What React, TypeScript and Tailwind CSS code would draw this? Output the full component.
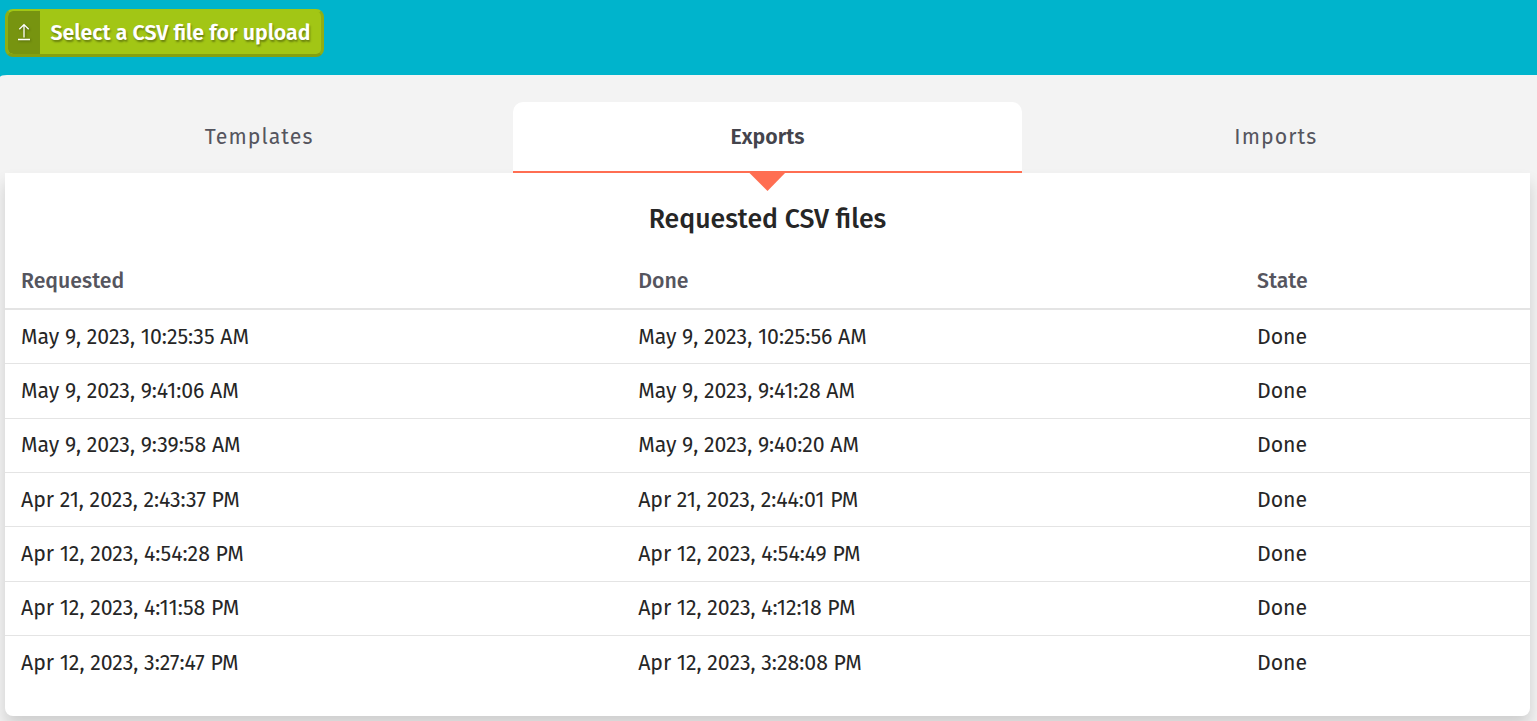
const tabs = [
  { label: "Templates", active: false },
  { label: "Exports", active: true },
  { label: "Imports", active: false },
];

const exportsList = [
  { requested: "May 9, 2023, 10:25:35 AM", done: "May 9, 2023, 10:25:56 AM", state: "Done" },
  { requested: "May 9, 2023, 9:41:06 AM", done: "May 9, 2023, 9:41:28 AM", state: "Done" },
  { requested: "May 9, 2023, 9:39:58 AM", done: "May 9, 2023, 9:40:20 AM", state: "Done" },
  { requested: "Apr 21, 2023, 2:43:37 PM", done: "Apr 21, 2023, 2:44:01 PM", state: "Done" },
  { requested: "Apr 12, 2023, 4:54:28 PM", done: "Apr 12, 2023, 4:54:49 PM", state: "Done" },
  { requested: "Apr 12, 2023, 4:11:58 PM", done: "Apr 12, 2023, 4:12:18 PM", state: "Done" },
  { requested: "Apr 12, 2023, 3:27:47 PM", done: "Apr 12, 2023, 3:28:08 PM", state: "Done" },
];

function UploadButton() {
  return (
    <button className="flex h-12 w-[319px] overflow-hidden rounded-lg border-x-[3px] border-t-2 border-b-[3px] border-x-[#8fae13] border-t-[#a2c615] border-b-[#83a012] bg-[#a2c615] text-white">
      <span className="flex w-8 shrink-0 items-center justify-center self-stretch rounded-l-[5px] bg-[#779410]">
        <svg
          className="mb-[2px] h-[18px] w-[14px] drop-shadow-[1px_1px_1px_rgba(0,0,0,0.3)]"
          viewBox="0 0 14 18"
          fill="none"
          stroke="currentColor"
          strokeWidth="1.3"
        >
          <path d="M7 14.5V1.6M2.3 6.2L7 1.6L11.7 6.2M1 16.5H13" />
        </svg>
      </span>
      <span className="flex-1 text-center text-[21.33px] leading-[45px] font-semibold whitespace-nowrap [text-shadow:1px_2px_2px_rgba(0,0,0,0.35)]">
        Select a CSV file for upload
      </span>
    </button>
  );
}

export default function App() {
  return (
    <div className="h-[721px] overflow-hidden bg-[#00b4cc] font-['Fira_Sans','Noto_Sans',sans-serif] text-[#262626]">

      {/* header */}

      <header className="h-[75px] pt-[9px] pl-[5px]">
        <UploadButton />
      </header>

      <main className="h-[646px] bg-[#f3f3f3] pt-[27px] pr-[7px] pl-[5px] [border-top-left-radius:7px_2px]">

        {/* tabs */}

        <nav className="relative z-10 grid h-[71px] grid-cols-3 text-[21.3px]">
          {tabs.map((tab) =>
            tab.active ? (
              <div
                key={tab.label}
                className="relative flex items-center justify-center rounded-t-[10px] border-b-2 border-[#ff6e52] bg-white pt-[2px] font-semibold text-[#44444c]"
              >
                {tab.label}
                <svg
                  className="absolute top-full left-1/2 h-[20px] w-[40px] -translate-x-1/2 fill-[#ff6e52]"
                  viewBox="0 0 40 20"
                >
                  <path d="M0.5 0H40L20.5 20Z" />
                </svg>
              </div>
            ) : (
              <div
                key={tab.label}
                className="flex items-center justify-center pt-px tracking-[1.07px] text-[#55555e]"
              >
                {tab.label}
              </div>
            )
          )}
        </nav>

        {/* requested files */}

        <section className="h-[543px] rounded-b-lg bg-white pt-[23px] shadow-[0_10px_15px_rgba(0,0,0,0.15)]">
          <h2 className="text-center text-[26.65px] leading-[46px] font-medium">
            Requested CSV files
          </h2>

          <table className="mt-[11px] w-full table-fixed border-collapse text-left text-[21.27px]">
            <colgroup>
              <col className="w-[617.2px]" />
              <col className="w-[618.8px]" />
              <col />
            </colgroup>
            <thead>
              <tr className="h-[56.3px] border-b-2 border-[#e4e4e4] text-[#55555e]">
                <th className="px-4 pt-0.5 font-medium">Requested</th>
                <th className="px-4 pt-0.5 font-medium">Done</th>
                <th className="px-4 pt-0.5 font-medium">State</th>
              </tr>
            </thead>
            <tbody>
              {exportsList.map((row) => (
                <tr
                  key={row.requested}
                  className="h-[54.36px] border-b border-[#e4e4e4] last:border-b-0"
                >
                  <td className="px-4 pt-[2px]">{row.requested}</td>
                  <td className="px-4 pt-[2px]">{row.done}</td>
                  <td className="px-4 pt-[2px]">{row.state}</td>
                </tr>
              ))}
            </tbody>
          </table>
        </section>

      </main>
    </div>
  );
}
